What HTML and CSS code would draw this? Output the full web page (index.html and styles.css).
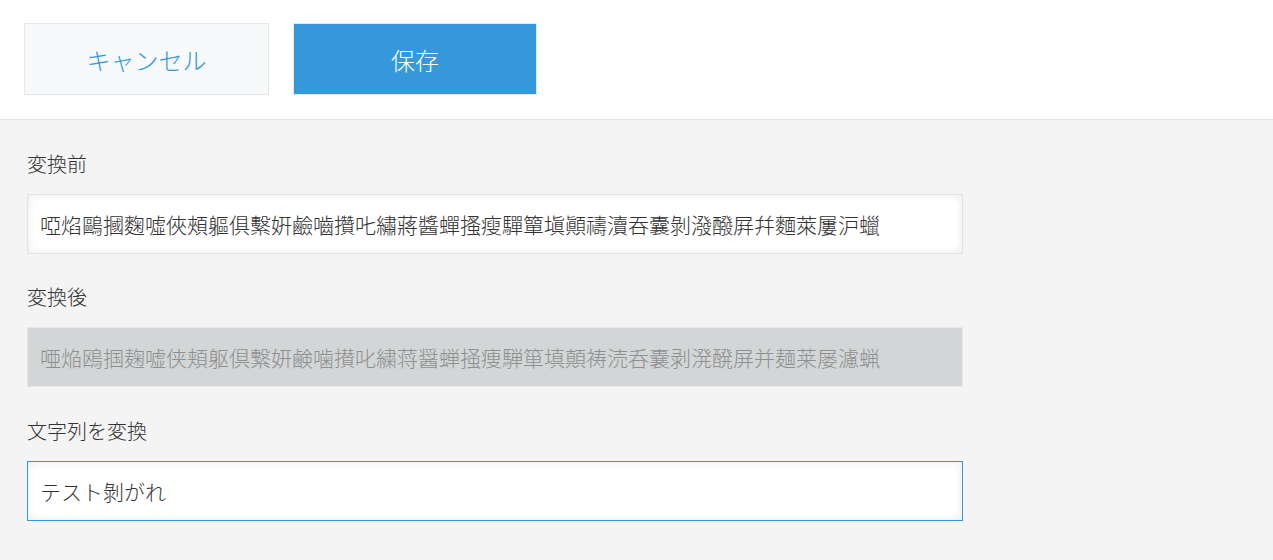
FILE: index.html
```html
<!DOCTYPE html>
<html lang="ja">
<head>
<meta charset="utf-8">
<title>変換</title>
<link rel="stylesheet" href="styles.css">
</head>
<body>
<header class="toolbar">
  <button class="btn btn-cancel" type="button">キャンセル</button>
  <button class="btn btn-save" type="button">保存</button>
</header>
<main class="content">
  <div class="field">
    <label class="label">変換前</label>
    <input class="input" type="text" value="啞焰鷗摑麴噓俠頰軀俱繫姸鹼嚙攢𠮟繡蔣醬蟬搔瘦驒簞塡顚禱瀆吞囊剝潑醱屛幷麵萊屢沪蠟" readonly>
  </div>
  <div class="field">
    <label class="label">変換後</label>
    <input class="input input-disabled" type="text" value="唖焔鴎掴麹嘘侠頬躯倶繋妍鹸噛攅叱繍蒋醤蝉掻痩騨箪填顛祷涜呑嚢剥溌醗屏并麺莱屡濾蝋" disabled>
  </div>
  <div class="field field-last">
    <label class="label">文字列を変換</label>
    <input class="input input-focus" type="text" value="テスト剝がれ">
  </div>
</main>
</body>
</html>
```

FILE: styles.css
```css
* { box-sizing: border-box; }
html, body {
  margin: 0;
  padding: 0;
}
body {
  background: #f4f4f4;
  font-family: "Noto Sans CJK JP", "Noto Sans", sans-serif;
  font-weight: 300;
  color: #333;
  height: 560px;
  overflow: hidden;
}
.toolbar {
  background: #fff;
  display: flex;
  gap: 24px;
  padding: 23px 24px 24px 24px;
  border-bottom: 1px solid #e3e3e3;
}
.btn {
  width: 245px;
  height: 72px;
  font-family: "Noto Sans CJK JP", "Noto Sans", sans-serif;
  font-weight: 300;
  font-size: 24px;
  border: 1px solid #e3e7e8;
  padding: 0;
  cursor: pointer;
}
.btn-cancel {
  background: #f7f9fa;
  color: #3498db;
}
.btn-save {
  width: 244px;
  background: #3498db;
  color: #fff;
}
.content {
  padding: 29px 27px 0 27px;
  display: flex;
  flex-direction: column;
  gap: 28px;
}
.field {
  display: flex;
  flex-direction: column;
  gap: 15px;
}
.field-last {
  margin-top: 1px;
}
.label {
  font-size: 20px;
  line-height: 30px;
  height: 30px;
  color: #333;
}
.input {
  width: 936px;
  height: 60px;
  border: 1px solid #e3e3e3;
  background: #fff;
  box-shadow: inset 0 0 8px rgba(0, 0, 0, 0.09);
  padding: 0 12px;
  font-family: "Noto Sans CJK JP", "Noto Sans", sans-serif;
  font-weight: 300;
  font-size: 21px;
  color: #333;
  outline: none;
}
.input-disabled {
  background: #d3d6d7;
  border-color: #e6e8e9;
  box-shadow: none;
  color: #8f8f8f;
  -webkit-text-fill-color: #8f8f8f;
  opacity: 1;
}
.input-focus {
  border-color: #3498db;
}
```
